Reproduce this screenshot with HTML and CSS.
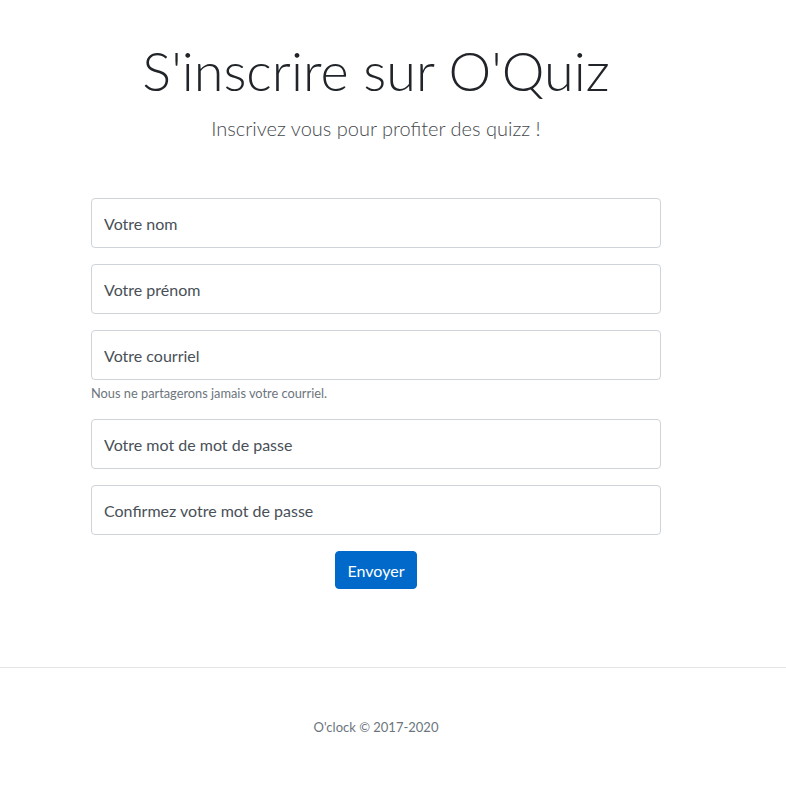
FILE: index.html
```html
<!DOCTYPE html>
<html lang="fr">
<head>
<meta charset="utf-8">
<title>S'inscrire sur O'Quiz</title>
<link rel="stylesheet" href="styles.css">
</head>
<body>
<main class="page">
  <header class="intro">
    <h1 class="title">S'inscrire sur O'Quiz</h1>
    <p class="lead">Inscrivez vous pour profiter des quizz !</p>
  </header>
  <form class="signup">
    <div class="field"><input class="control" type="text" placeholder="Votre nom"></div>
    <div class="field"><input class="control" type="text" placeholder="Votre prénom"></div>
    <div class="field field-help">
      <input class="control" type="email" placeholder="Votre courriel">
      <small class="help">Nous ne partagerons jamais votre courriel.</small>
    </div>
    <div class="field"><input class="control" type="password" placeholder="Votre mot de mot de passe"></div>
    <div class="field"><input class="control" type="password" placeholder="Confirmez votre mot de passe"></div>
    <div class="actions"><button class="btn" type="submit">Envoyer</button></div>
  </form>
</main>
<footer class="site-footer">
  <p class="copy">O'clock © 2017-2020</p>
</footer>
</body>
</html>
```
FILE: styles.css
```css
* { box-sizing: border-box; }
body {
  margin: 0;
  font-family: Lato, "Noto Sans", sans-serif;
  color: #212529;
  background: #fff;
}
.page {
  width: 570px;
  margin-left: 91px;
  padding-top: 37px;
}
.intro {
  text-align: center;
}
.title {
  margin: 0;
  font-family: Lato, sans-serif;
  font-weight: 300;
  font-size: 54px;
  line-height: 67px;
  color: #212529;
}
.lead {
  margin: 9px 0 0;
  font-size: 20px;
  font-weight: 300;
  line-height: 30px;
  color: #45484c;
}
.signup {
  margin-top: 55px;
  display: flex;
  flex-direction: column;
  gap: 16px;
}
.field {
  display: flex;
  flex-direction: column;
}
.field-help {
  gap: 4px;
}
.control {
  height: 50px;
  width: 100%;
  padding: 0 12px;
  border: 1px solid #ced4da;
  border-radius: 4px;
  font-family: Lato, sans-serif;
  font-size: 16px;
  color: #495057;
  background: #fff;
}
.control::placeholder {
  color: #495057;
  opacity: 1;
}
.help {
  font-size: 12.8px;
  color: #6c757d;
  line-height: 19px;
}
.actions {
  display: flex;
  justify-content: center;
}
.btn {
  height: 38px;
  padding: 0 12px;
  border: 1px solid #0069c9;
  border-radius: 4px;
  background: #0069c9;
  color: #fff;
  font-family: Lato, sans-serif;
  font-size: 16px;
}
.site-footer {
  margin-top: 78px;
  border-top: 1px solid #e5e5e5;
  padding: 49px 34px 0 0;
  text-align: center;
}
.copy {
  margin: 0;
  font-size: 13px;
  color: #6c757d;
  line-height: 20px;
}
```
